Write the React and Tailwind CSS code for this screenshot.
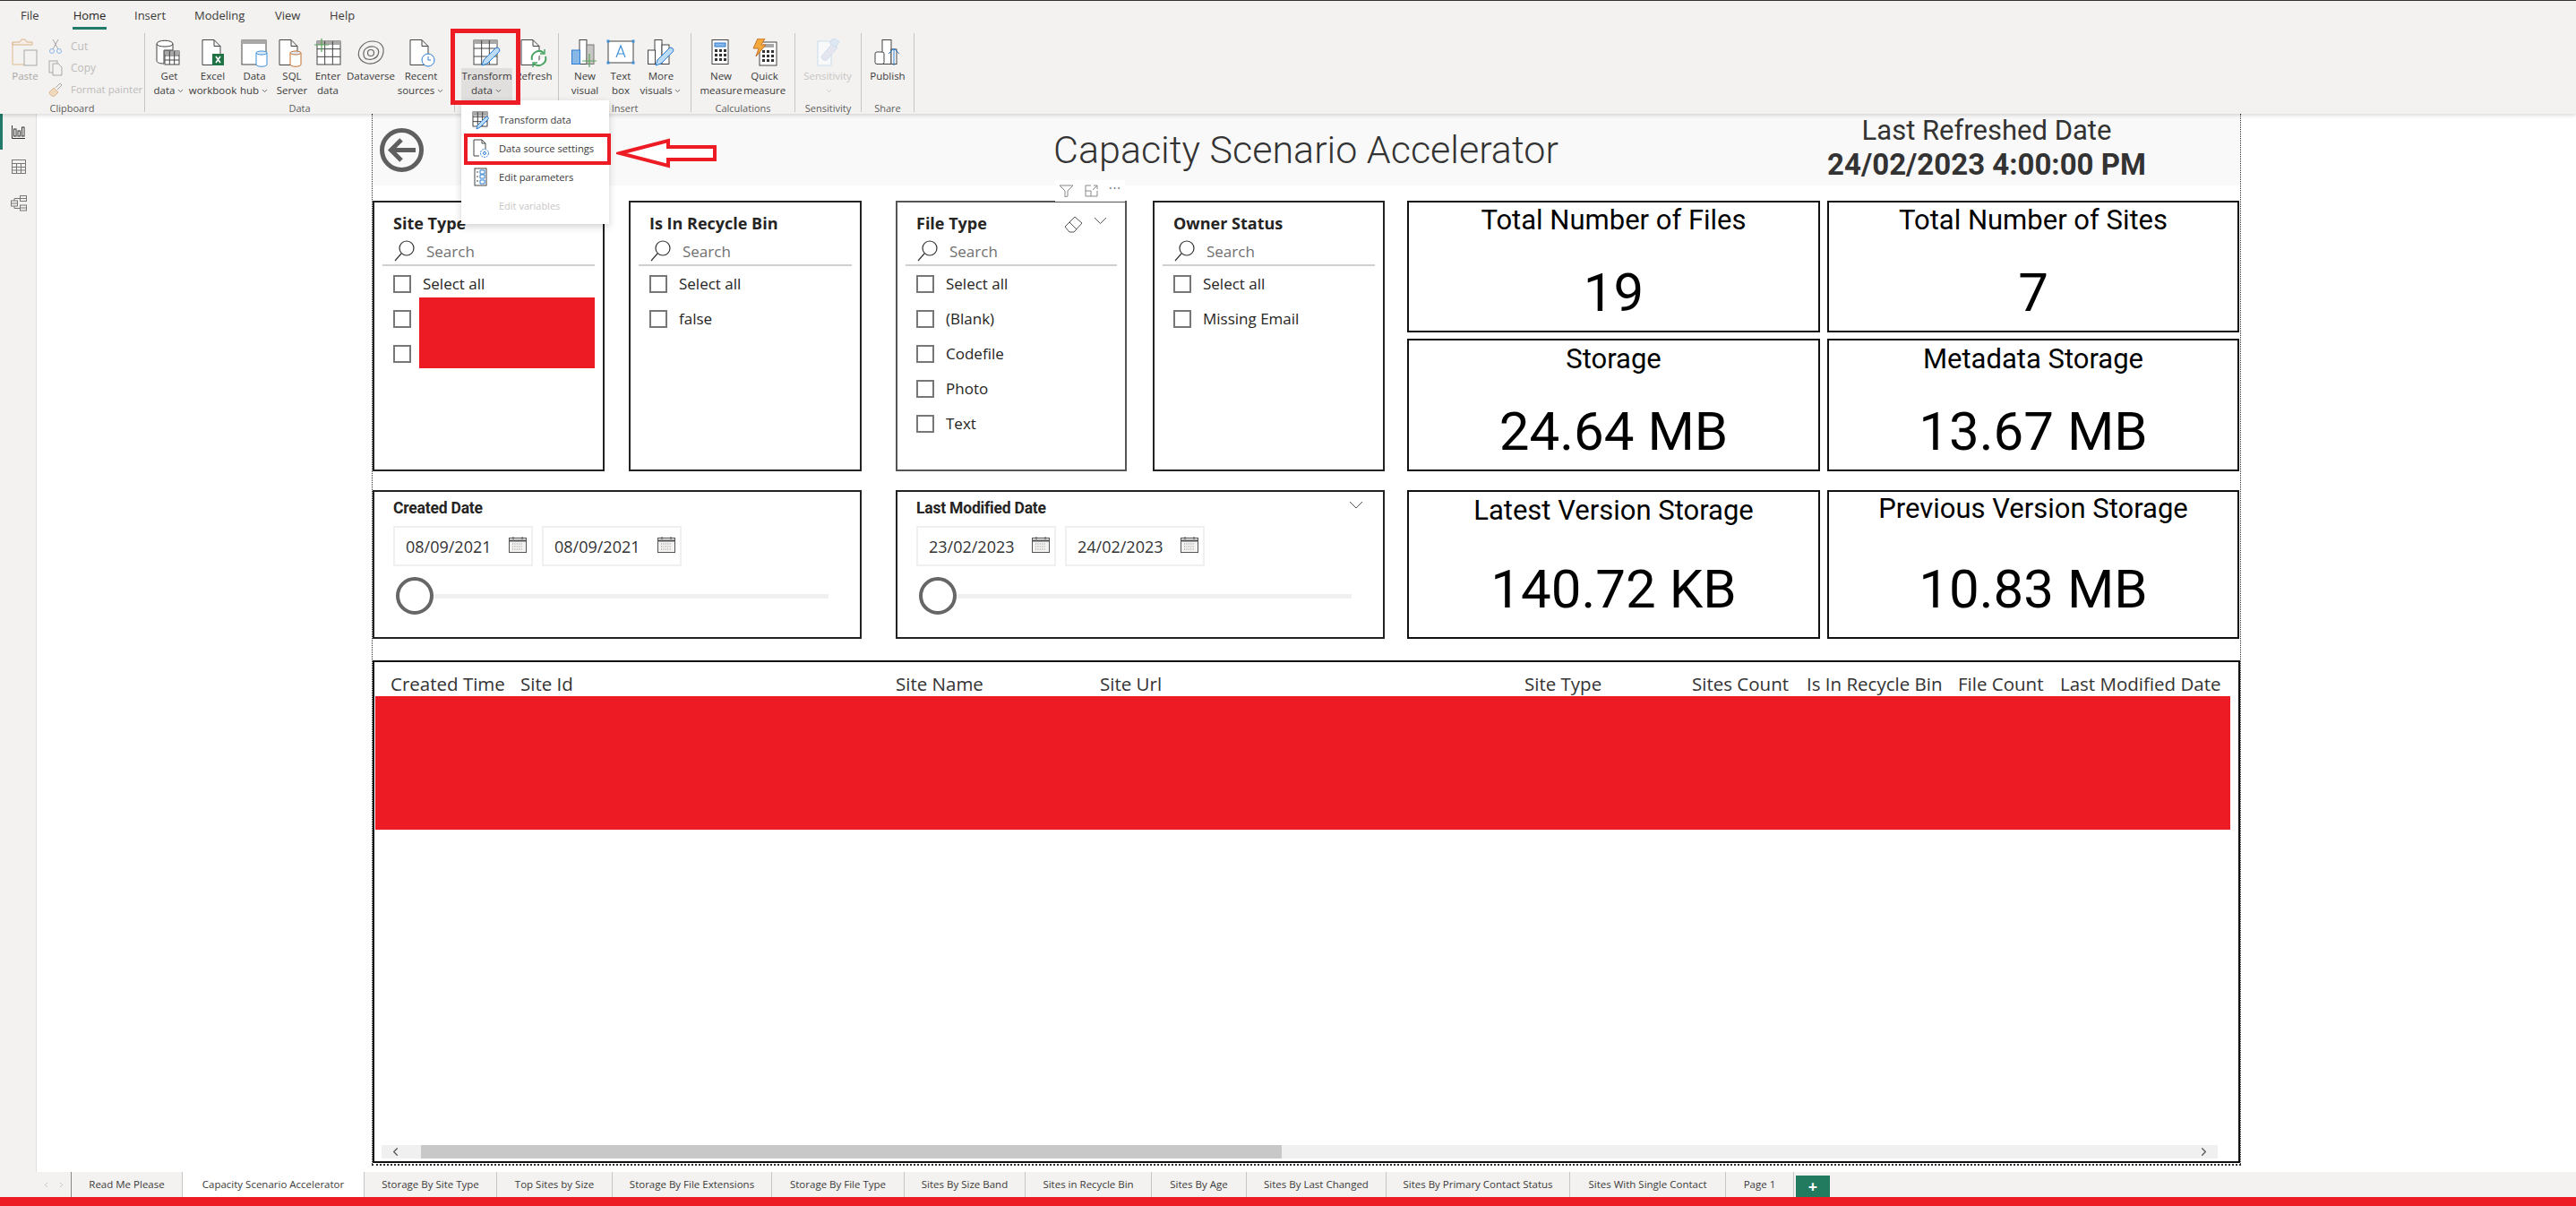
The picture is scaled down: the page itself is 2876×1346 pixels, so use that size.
import { ChevronDown, ChevronLeft, ChevronRight } from 'lucide-react';

const ui = "font-['Open_Sans',sans-serif]";
const din = "font-['Roboto',sans-serif]";

function Svg({ children, w = 32, h = 32, className = '' }) {
  return (
    <svg width={w} height={h} viewBox={`0 0 ${w} ${h}`} fill="none" stroke="#444" strokeWidth="1" className={className}>
      {children}
    </svg>
  );
}

const Pencil = ({ x = 0, y = 0 }) => (
  <path transform={`translate(${x} ${y})`} d="M0 20l2-6L15 1c1-1 3-1 4 0s1 3 0 4L6 18z" fill="#bcdcf5" stroke="#2b7cd3" />
);

const Grid = ({ x, y, w, h, cols, rows, head }) => {
  const lines = [];
  for (let i = 1; i < cols; i++) lines.push(<path key={`c${i}`} d={`M${x + (w * i) / cols} ${y}v${h}`} />);
  for (let i = 1; i < rows; i++) lines.push(<path key={`r${i}`} d={`M${x} ${y + (h * i) / rows}h${w}`} />);
  return (
    <g>
      <rect x={x} y={y} width={w} height={h} fill="#fff" />
      {head && <rect x={x} y={y} width={w} height="4" fill="#a8a8a8" stroke="none" />}
      {lines}
    </g>
  );
};

const Doc = () => <path d="M4 1.5h13l7 7v21H4zM17 1.5v7h7" fill="#fff" />;

const Cyl = ({ x, y, w, h, c }) => (
  <g stroke={c}>
    <path d={`M${x} ${y + 2}v${h}c0 3 ${w} 3 ${w} 0v-${h}`} fill="#fff" />
    <ellipse cx={x + w / 2} cy={y + 2} rx={w / 2} ry="2" fill="#dcebf7" />
  </g>
);

const icons = {
  get: (
    <Svg>
      <path d="M2 6c0-5 18-5 18 0v7H10v15c-4 0-8-1-8-3z" fill="#fff" />
      <path d="M2 6c0 4 18 4 18 0" />
      <Grid x={11} y={14} w={16} h={15} cols={3} rows={3} head />
    </Svg>
  ),
  excel: (
    <Svg>
      <Doc />
      <rect x="15" y="17" width="13" height="13" fill="#217346" stroke="none" />
      <path d="M19 20l5 7M24 20l-5 7" stroke="#fff" strokeWidth="1.6" />
    </Svg>
  ),
  hub: (
    <Svg>
      <rect x="2" y="2" width="27" height="27" fill="#fff" />
      <rect x="2" y="2" width="27" height="4" fill="#a8a8a8" stroke="none" />
      <Cyl x={18} y={14} w={12} h={13} c="#3a8fd8" />
    </Svg>
  ),
  sql: (
    <Svg>
      <path d="M2 1.5h13l7 7v21H2zM15 1.5v7h7" fill="#fff" />
      <Cyl x={14} y={14} w={12} h={13} c="#c8702c" />
    </Svg>
  ),
  enter: (
    <Svg>
      <Grid x={4} y={3} w={26} h={26} cols={3} rows={3} head />
      <path d="M9 0v15M1 7h16" stroke="#5aa55a" strokeWidth="1.2" />
    </Svg>
  ),
  dataverse: (
    <Svg>
      <path d="M3 21C0 12 8 3 18 3c8 0 13 5 12 12-1 9-9 14-17 13-5-1-8-3-10-7z" stroke="#666" strokeWidth="1.2" />
      <path d="M8 18c-1-6 5-10 11-9 5 1 7 5 5 9-2 5-8 6-12 5-2 0-4-2-4-5z" stroke="#666" strokeWidth="1.2" />
      <circle cx="16" cy="16" r="3.5" stroke="#666" strokeWidth="1.2" />
    </Svg>
  ),
  recent: (
    <Svg>
      <path d="M4 1.5h13l7 7v21H4zM17 1.5v7h7" fill="#fff" />
      <circle cx="24" cy="24" r="7" fill="#fff" stroke="#2b7cd3" />
      <path d="M24 20v4h3" stroke="#2b7cd3" />
    </Svg>
  ),
  transform: (
    <Svg>
      <Grid x={1} y={2} w={26} h={27} cols={3} rows={3} head />
      <Pencil x={10} y={10} />
    </Svg>
  ),
  refresh: (
    <Svg>
      <path d="M2 1.5h13l7 7v21H2zM15 1.5v7h7" fill="#fff" />
      <path d="M14 24a8 8 0 0 1 13-8M29 20a8 8 0 0 1-13 8" stroke="#4aa564" strokeWidth="2" fill="#fff" />
      <path d="M28 12v5h-5M15 32v-5h5" stroke="#4aa564" strokeWidth="1.5" />
    </Svg>
  ),
  visual: (
    <Svg>
      <rect x="10" y="1.5" width="8" height="27" fill="#fff" />
      <rect x="18" y="7" width="8" height="21.5" fill="#c8c6c4" stroke="#777" />
      <rect x="1.5" y="13" width="9" height="15.5" fill="#8ab8e6" stroke="#2b7cd3" />
      <path d="M21 17v15M13 25h16" stroke="#5aa55a" strokeWidth="1.2" />
    </Svg>
  ),
  textbox: (
    <Svg>
      <rect x="2" y="3" width="28" height="24" fill="#fff" />
      {[[2, 3], [30, 3], [2, 27], [30, 27]].map(([x, y]) => (
        <rect key={`${x}${y}`} x={x - 1.5} y={y - 1.5} width="3" height="3" fill="#3a8fd8" stroke="none" />
      ))}
      <path d="M11 21l5-13 5 13M12.5 17h7" stroke="#3a8fd8" strokeWidth="1.2" />
    </Svg>
  ),
  more: (
    <Svg>
      <rect x="9" y="1.5" width="8" height="27" fill="#fff" />
      <rect x="17" y="7" width="8" height="21.5" fill="#fff" />
      <rect x="1.5" y="13" width="8" height="15.5" fill="#fff" />
      <Pencil x={10} y={10} />
    </Svg>
  ),
  measure: (
    <Svg>
      <rect x="6" y="1.5" width="18" height="27" fill="#fff" />
      <rect x="9" y="5" width="12" height="4" fill="#8ab8e6" stroke="#2b7cd3" />
      {[12, 17, 22].map((y) => [10, 15, 20].map((x) => <rect key={`${x}${y}`} x={x - 1} y={y} width="3" height="3" fill="#333" stroke="none" />))}
    </Svg>
  ),
  quick: (
    <Svg>
      <rect x="10" y="4" width="19" height="26" fill="#fff" />
      <rect x="14" y="6" width="12" height="4" fill="#a8a8a8" stroke="none" />
      {[13, 18, 23].map((y) => [14, 19, 24].map((x) => <rect key={`${x}${y}`} x={x - 1} y={y} width="3" height="3" fill="#333" stroke="none" />))}
      <path d="M8 0h8l-4 7h5L6 20l3-9H3z" fill="#f2a93b" stroke="#c8702c" />
    </Svg>
  ),
  sensitivity: (
    <Svg>
      <path d="M5 3h15v27H5z" fill="#fff" stroke="#b8d4ee" strokeWidth="1.2" />
      <path d="M9 20l12-14 6 4-12 14c-2 1-6 0-6-4z" fill="#dde" stroke="#b8d4ee" />
      <rect x="20" y="1" width="8" height="7" transform="rotate(35 24 4)" fill="#cfe2f3" stroke="#b8d4ee" />
    </Svg>
  ),
  publish: (
    <Svg>
      <rect x="10" y="1.5" width="10" height="27" fill="#fff" />
      <rect x="2" y="15" width="10" height="13.5" rx="2" fill="#fff" />
      <rect x="20" y="12" width="6" height="16.5" fill="#fff" />
      <path d="M23 30V11M17 17l6-6 6 6" stroke="#2b7cd3" />
    </Svg>
  ),
};

const Chev = () => <ChevronDown size={9} strokeWidth={2} className="inline ml-[2px]" />;

function Btn({ icon, l1, l2, chev, w, faded, active }) {
  return (
    <div className={`flex flex-col items-center ${w} ${faded ? 'text-[#a9a7a5] opacity-60' : ''}`}>
      <div className="h-[34px]">{icon}</div>
      <div className={`flex flex-col items-center self-stretch leading-[16px] whitespace-nowrap ${active ? 'bg-[#e1dfdd] h-[36px] -mt-[1px] pt-[1px]' : ''}`}>
        <span>{l1}</span>
        <span>{l2}{chev && <Chev />}</span>
      </div>
    </div>
  );
}

function Group({ label, w, children, pl = 'pl-0' }) {
  return (
    <div className={`flex flex-col ${w} shrink-0`}>
      <div className={`flex h-[70px] ${pl}`}>{children}</div>
      <div className="text-center leading-[15px] text-[11px] text-[#605e5c]">{label}</div>
    </div>
  );
}

const Sep = () => <div className="w-px bg-[#c8c6c4] h-[88px] -mt-[6px] shrink-0" />;

function Ribbon() {
  return (
    <div className={`relative z-10 h-[127px] shrink-0 bg-[#f3f2f1] border-t border-[#333] shadow-[0_2px_4px_rgba(0,0,0,0.14)] text-[11.5px] text-[#3b3a39] ${ui}`}>
      <div className="flex h-[32px] items-start pt-[6px] text-[13px] leading-[20px] whitespace-nowrap">
        <span className="ml-[23px] w-[20px]">File</span>
        <span className="ml-[38px] w-[38px] text-[#252423] border-b-[3px] border-[#217a6a] h-[26px] text-center">Home</span>
        <span className="ml-[31px] w-[35px]">Insert</span>
        <span className="ml-[32px] w-[58px]">Modeling</span>
        <span className="ml-[32px] w-[30px]">View</span>
        <span className="ml-[31px] w-[29px]">Help</span>
      </div>
      <div className="flex pt-[10px]">
        <Group label="Clipboard" w="w-[161px]">
          <div className="flex flex-col items-center w-[56px] text-[#a9a7a5]">
            <div className="h-[34px]">
              <Svg>
                <path d="M2 4h8l2-3h4l2 3h6v3H2z" stroke="#d8b48c" fill="#f6ede4" />
                <path d="M2 4v25h14" stroke="#e0b890" />
                <rect x="15" y="13" width="14" height="17" fill="#f3f2f1" stroke="#a8a8a8" />
              </Svg>
            </div>
            <span className="leading-[16px]">Paste</span>
          </div>
          <div className="flex flex-col text-[#bdbbb9] text-[12px] -mt-[3px] leading-[24px] ml-[-2px] whitespace-nowrap">
            <div className="flex items-center gap-[5px] h-[24px]">
              <Svg w={16} h={18}><path d="M5 1l6 11M11 1L5 12" stroke="#a8a8a8" /><circle cx="4" cy="14" r="2.5" stroke="#8ab8e6" /><circle cx="12" cy="14" r="2.5" stroke="#8ab8e6" /></Svg>
              <span className="ml-[4px]">Cut</span>
            </div>
            <div className="flex items-center gap-[5px] h-[24px]">
              <Svg w={16} h={18}><rect x="1" y="1" width="9" height="13" stroke="#a8a8a8" /><path d="M5 4h6l4 4v9H5z" fill="#f3f2f1" stroke="#a8a8a8" /></Svg>
              <span className="ml-[4px]">Copy</span>
            </div>
            <div className="flex items-center gap-[5px] h-[24px]">
              <Svg w={16} h={18}><path d="M1 12l5-5 5 5-4 4c-2 1-5 0-6-4z" fill="#f0d8bc" stroke="#d8b48c" /><path d="M8 7l5-5 2 2-5 5" stroke="#a8a8a8" /></Svg>
              <span className="ml-[4px] text-[11.5px]">Format painter</span>
            </div>
          </div>
        </Group>
        <Sep />
        <Group label="Data" w="w-[345px]" pl="pl-[3px]">
          <Btn icon={icons.get} l1="Get" l2="data" chev w="w-[48px]" />
          <Btn icon={icons.excel} l1="Excel" l2="workbook" w="w-[49px]" />
          <Btn icon={icons.hub} l1="Data" l2="hub" chev w="w-[44px]" />
          <Btn icon={icons.sql} l1="SQL" l2="Server" w="w-[40px]" />
          <Btn icon={icons.enter} l1="Enter" l2="data" w="w-[40px]" />
          <Btn icon={icons.dataverse} l1="Dataverse" l2="" w="w-[56px]" />
          <Btn icon={icons.recent} l1="Recent" l2="sources" chev w="w-[56px]" />
        </Group>
        <Sep />
        <Group label="" w="w-[115px]" pl="pl-[7px]">
          <Btn icon={icons.transform} l1="Transform" l2="data" chev w="w-[57px]" active />
          <Btn icon={icons.refresh} l1="Refresh" l2="" w="w-[48px]" />
        </Group>
        <Sep />
        <Group label="Insert" w="w-[147px]" pl="pl-[8px]">
          <Btn icon={icons.visual} l1="New" l2="visual" w="w-[42px]" />
          <Btn icon={icons.textbox} l1="Text" l2="box" w="w-[38px]" />
          <Btn icon={icons.more} l1="More" l2="visuals" chev w="w-[52px]" />
        </Group>
        <Sep />
        <Group label="Calculations" w="w-[115px]" pl="pl-[8px]">
          <Btn icon={icons.measure} l1="New" l2="measure" w="w-[50px]" />
          <Btn icon={icons.quick} l1="Quick" l2="measure" w="w-[47px]" />
        </Group>
        <Sep />
        <Group label="Sensitivity" w="w-[73px]" pl="pl-[7px]">
          <Btn icon={icons.sensitivity} l1="Sensitivity" l2="" chev w="w-[58px]" faded />
        </Group>
        <Sep />
        <Group label="Share" w="w-[58px]" pl="pl-[6px]">
          <Btn icon={icons.publish} l1="Publish" l2="" w="w-[46px]" />
        </Group>
        <Sep />
      </div>
    </div>
  );
}

function Dropdown() {
  return (
    <div className={`absolute left-[515px] top-[112px] z-20 w-[165px] h-[138px] bg-white pt-[6px] shadow-[0_3px_8px_rgba(0,0,0,0.18)] text-[11.2px] text-[#3b3a39] ${ui}`}>
      {[
        ['Transform data', <Svg key="a" w={20} h={22}><Grid x={1} y={2} w={16} h={16} cols={3} rows={3} head /><path d="M5 21l1-4 9-9c1-1 2-1 3 0s0 2 0 2l-9 9z" fill="#bcdcf5" stroke="#2b7cd3" /></Svg>],
        ['Data source settings', <Svg key="b" w={20} h={22}><path d="M2 1h9l4 4v6M2 1v18h6M11 1v4h4" /><circle cx="14" cy="16" r="4.5" stroke="#2b7cd3" strokeDasharray="2 1" /><circle cx="14" cy="16" r="1.5" stroke="#2b7cd3" /></Svg>],
        ['Edit parameters', <Svg key="c" w={20} h={22}><rect x="3" y="1" width="13" height="19" /><path d="M5 5h2M5 10h2M5 15h2" /><path d="M9 3h5v4H9zM9 8h5v4H9zM9 14h5v4H9z" stroke="#2b7cd3" /></Svg>],
      ].map(([t, ic]) => (
        <div key={t} className="flex items-center h-[32px] pl-[12px] gap-[10px] whitespace-nowrap">
          {ic}
          <span>{t}</span>
        </div>
      ))}
      <div className="flex items-center h-[32px] pl-[42px] text-[#c8c6c4] text-[11px]">Edit variables</div>
    </div>
  );
}

function Annotations() {
  return (
    <>
      <div className="absolute left-[503px] top-[32px] z-30 w-[78px] h-[85px] border-[5px] border-[#ed1c24]" />
      <div className="absolute left-[518px] top-[149px] z-30 w-[164px] h-[35px] border-[4px] border-[#ed1c24]" />
      <svg className="absolute left-[688px] top-[152px] z-30" width="114" height="36" viewBox="0 0 114 36">
        <path d="M4 19L58 5v7h52v14H58v7z" fill="#fff" stroke="#ed1c24" strokeWidth="4" />
      </svg>
    </>
  );
}

function Search() {
  return (
    <div className="flex items-center h-[31px] mt-[5px] mx-[9px] border-b-2 border-[#d0d0d0] pl-[13px] text-[#707070] text-[17px]">
      <svg width="23" height="24" viewBox="0 0 23 24" fill="none" stroke="#333" strokeWidth="1.2" className="-mt-[2px]">
        <circle cx="14" cy="9" r="8" />
        <path d="M8 15L1 23" />
      </svg>
      <span className="ml-[13px] leading-[20px]">Search</span>
    </div>
  );
}

function CheckRow({ label, box = 'border-[#777]' }) {
  return (
    <div className="flex items-center h-[39px] pl-[21px] text-[#252423] text-[17px]">
      <div className={`size-[20px] border-2 ${box} shrink-0`} />
      <span className="ml-[13px] leading-[20px]">{label}</span>
    </div>
  );
}

function Slicer({ title, items, w, ml = '', border = 'border-[#222]', extra, redact }) {
  return (
    <div className={`relative ${w} ${ml} h-[302px] shrink-0 border-2 ${border} ${ui}`}>
      <div className="pl-[21px] pt-[11px] leading-[24px] font-bold text-[18px] text-[#252423]">{title}</div>
      <Search />
      <div>
        {items.map((it, i) => (
          <CheckRow key={`${it}${i}`} label={it} />
        ))}
        {redact}
      </div>
      {extra}
    </div>
  );
}

function Card({ title, value, h, pt = 'pt-[2px]', vpt = 'mt-[28px]' }) {
  return (
    <div className={`${h} border-2 border-[#111] flex flex-col items-center ${pt} text-black whitespace-nowrap ${din}`}>
      <div className="text-[31px] leading-[36px]">{title}</div>
      <div className={`text-[60px] leading-[70px] ${vpt}`}>{value}</div>
    </div>
  );
}

function DateInput({ v }) {
  return (
    <div className="flex w-[156px] h-[45px] border-2 border-[#f0f0f0] items-center pl-[12px] text-[18px] text-[#333]">
      <span className="w-[114px] pt-[1px]">{v}</span>
      <svg width="22" height="20" viewBox="0 0 22 20" fill="none" stroke="#555" className="-mt-[4px]">
        <rect x="1.5" y="2.5" width="19" height="16" fill="#f3f2f1" />
        <path d="M1.5 5.5h19" strokeWidth="2" />
        <path d="M6 1v3M16 1v3" />
        <path d="M5 9h12M5 12h12M5 15h12" stroke="#888" strokeDasharray="1 1.4" />
      </svg>
    </div>
  );
}

function DateSlicer({ title, a, b, ml = '', chev }) {
  return (
    <div className={`relative w-[546px] ${ml} h-[166px] shrink-0 border-2 border-[#222] pl-[21px] ${din}`}>
      <div className="pt-[6px] font-bold text-[17.5px] leading-[24px] text-[#252423] tracking-[-0.2px]">{title}</div>
      <div className={`flex gap-[10px] mt-[8px] ${ui}`}>
        <DateInput v={a} />
        <DateInput v={b} />
      </div>
      <div className="flex items-center mt-[12px] ml-[3px]">
        <div className="size-[42px] rounded-full border-[4px] border-[#666] bg-white shrink-0" />
        <div className="h-[5px] w-[441px] bg-[#f0f0f0]" />
      </div>
      {chev && (
        <svg className="absolute right-[22px] top-[10px]" width="16" height="10" viewBox="0 0 16 10" fill="none" stroke="#555">
          <path d="M1 1l7 7 7-7" />
        </svg>
      )}
    </div>
  );
}

const headers = ['Created Time', 'Site Id', 'Site Name', 'Site Url', 'Site Type', 'Sites Count', 'Is In Recycle Bin', 'File Count', 'Last Modified Date'];

function Table() {
  return (
    <div className={`h-[561px] mt-[24px] w-[2085px] border-2 border-[#111] flex flex-col ${ui}`}>
      <div className="grid grid-cols-[145px_419px_228px_474px_187px_128px_169px_114px_180px] h-[38px] pt-[10px] pl-[18px] leading-[28px] text-[20.5px] text-[#333] whitespace-nowrap">
        {headers.map((h) => (
          <span key={h}>{h}</span>
        ))}
      </div>
      <div className="ml-[1px] w-[2071px] h-[149px] bg-[#ed1c24]" />
      <div className="mt-auto mb-[3px] ml-[8px] w-[2050px] h-[15px] bg-[#f0f0f0] flex items-center">
        <div className="w-[44px] pl-[8px] text-[#555]"><ChevronLeft size={15} /></div>
        <div className="w-[961px] h-[15px] bg-[#c8c8c8]" />
        <div className="ml-auto pr-[8px] text-[#555]"><ChevronRight size={15} /></div>
      </div>
    </div>
  );
}

function Report() {
  return (
    <div className="relative ml-[374px] w-[2087px] h-[1174px] border-x border-b-2 border-dotted border-[#333]">
      <div className="flex items-center h-[80px] bg-[#f9f9f9] text-[#333]">
        <div className="ml-[8px] flex items-center justify-center size-[49px] rounded-full border-[5px] border-[#5f5f5f] shrink-0">
          <svg width="31" height="27" viewBox="0 0 31 27" fill="none" stroke="#5f5f5f" strokeWidth="5">
            <path d="M31 13.5H4M15 2L3.5 13.5 15 25" />
          </svg>
        </div>
        <div className={`ml-[700px] w-[570px] text-center text-[43px] font-light whitespace-nowrap ${din}`}>Capacity Scenario Accelerator</div>
        <div className={`ml-[275px] w-[400px] text-center whitespace-nowrap ${din}`}>
          <div className="text-[31px] leading-[38px] -mt-[4px]">Last Refreshed Date</div>
          <div className="text-[33px] leading-[38px] font-bold">24/02/2023 4:00:00 PM</div>
        </div>
      </div>

      <div className="flex mt-[17px]">
        <Slicer
          title="Site Type"
          w="w-[259px]"
          items={['Select all', '', '']}
          redact={<div className="absolute left-[50px] top-[106px] w-[196px] h-[79px] bg-[#ed1c24]" />}
        />
        <Slicer title="Is In Recycle Bin" w="w-[260px]" ml="ml-[27px]" items={['Select all', 'false']} />
        <Slicer
          title="File Type"
          w="w-[258px]"
          ml="ml-[38px]"
          border="border-[#555]"
          items={['Select all', '(Blank)', 'Codefile', 'Photo', 'Text']}
          extra={
            <>
              <svg className="absolute left-[186px] top-[15px]" width="22" height="20" viewBox="0 0 22 20" fill="none" stroke="#555">
                <path d="M1 12L12 1l8 7-9 10H6zM6 7l8 8" />
              </svg>
              <svg className="absolute left-[219px] top-[16px]" width="15" height="9" viewBox="0 0 15 9" fill="none" stroke="#555">
                <path d="M1 1l6.5 6.5L14 1" />
              </svg>
              <div className="absolute left-[176px] -top-[25px] flex gap-[5px] bg-white h-[24px] items-center px-[4px]">
                <svg width="18" height="14" viewBox="0 0 18 14" fill="none" stroke="#888"><path d="M1 1h15L10 7v6l-3 1V7z" /></svg>
                <svg width="16" height="14" viewBox="0 0 16 14" fill="none" stroke="#888" className="ml-[6px]"><path d="M1 1h6M1 1v12h13V7M1 7h6v6M9 6l5-5M10 1h4v4" /></svg>
                <span className="ml-[6px] text-[#666] text-[14px] leading-[10px] tracking-[1px] -mt-[6px]">···</span>
              </div>
            </>
          }
        />
        <Slicer title="Owner Status" w="w-[259px]" ml="ml-[29px]" items={['Select all', 'Missing Email']} />
        <div className="ml-[25px] w-[461px] flex flex-col gap-[7px]">
          <Card title="Total Number of Files" value="19" h="h-[147px]" />
          <Card title="Storage" value="24.64 MB" h="h-[148px]" pt="pt-[3px]" vpt="mt-[28px]" />
        </div>
        <div className="ml-[8px] w-[460px] flex flex-col gap-[7px]">
          <Card title="Total Number of Sites" value="7" h="h-[147px]" />
          <Card title="Metadata Storage" value="13.67 MB" h="h-[148px]" pt="pt-[3px]" vpt="mt-[28px]" />
        </div>
      </div>

      <div className="flex mt-[21px]">
        <DateSlicer title="Created Date" a="08/09/2021" b="08/09/2021" />
        <DateSlicer title="Last Modified Date" a="23/02/2023" b="24/02/2023" ml="ml-[38px]" chev />
        <div className="ml-[25px] w-[461px]">
          <Card title="Latest Version Storage" value="140.72 KB" h="h-[166px]" pt="pt-[3px]" vpt="mt-[35px]" />
        </div>
        <div className="ml-[8px] w-[460px]">
          <Card title="Previous Version Storage" value="10.83 MB" h="h-[166px]" pt="pt-[1px]" vpt="mt-[37px]" />
        </div>
      </div>

      <Table />
    </div>
  );
}

const tabs = [
  ['Read Me Please', 'w-[124px]'],
  ['Capacity Scenario Accelerator', 'w-[203px] bg-white'],
  ['Storage By Site Type', 'w-[148px]'],
  ['Top Sites by Size', 'w-[129px]'],
  ['Storage By File Extensions', 'w-[178px]'],
  ['Storage By File Type', 'w-[148px]'],
  ['Sites By Size Band', 'w-[135px]'],
  ['Sites in Recycle Bin', 'w-[141px]'],
  ['Sites By Age', 'w-[106px]'],
  ['Sites By Last Changed', 'w-[156px]'],
  ['Sites By Primary Contact Status', 'w-[205px]'],
  ['Sites With Single Contact', 'w-[174px]'],
  ['Page 1', 'w-[76px]'],
];

function TabBar() {
  return (
    <div className={`flex h-[28px] shrink-0 bg-[#f3f2f1] pl-[41px] text-[11.5px] text-[#3b3a39] ${ui}`}>
      <div className="w-[39px] flex items-center justify-center gap-[8px] border-r border-[#8a8886] text-[#b5b3b1]">
        <ChevronLeft size={9} />
        <ChevronRight size={9} />
      </div>
      {tabs.map(([t, w]) => (
        <div key={t} className={`${w} flex items-center justify-center border-r border-[#c8c6c4] whitespace-nowrap`}>
          {t}
        </div>
      ))}
      <div className="ml-[2px] mt-[4px] w-[38px] h-[24px] bg-[#237b5f] text-white text-[18px] font-bold flex items-center justify-center leading-none">+</div>
    </div>
  );
}

export default function App() {
  return (
    <div className="relative flex flex-col w-[2876px] h-[1346px] overflow-hidden bg-white">
      <Ribbon />
      <Dropdown />
      <Annotations />
      <div className="flex h-[1181px] shrink-0">
        <div className="w-[41px] shrink-0 bg-[#f3f2f1] border-r border-[#e1dfdd] flex flex-col relative">
          <div className="absolute left-0 top-0 w-[3px] h-[40px] bg-[#217a6a]" />
          <svg className="mt-[12px] ml-[13px]" width="16" height="16" viewBox="0 0 16 16" fill="none" stroke="#333" strokeWidth="1">
            <path d="M.5 1v14.5H15" /><rect x="2.5" y="5" width="2.5" height="8" /><rect x="7" y="7" width="2.5" height="6" /><rect x="11.5" y="3" width="2.5" height="10" />
          </svg>
          <svg className="mt-[23px] ml-[13px]" width="16" height="16" viewBox="0 0 16 16" fill="none" stroke="#777" strokeWidth="1">
            <rect x=".5" y=".5" width="15" height="15" /><path d="M.5 4.5h15M.5 8.5h15M.5 12h15M5.5 4.5v11M10.5 4.5v11" />
          </svg>
          <svg className="mt-[24px] ml-[12px]" width="18" height="18" viewBox="0 0 18 18" fill="none" stroke="#777" strokeWidth="1">
            <rect x=".5" y="6" width="7" height="6" /><rect x="10.5" y=".5" width="7" height="6" /><rect x="10.5" y="11" width="7" height="6" /><path d="M4 6V3.5h6.5M4 12v2.5h6.5M.5 9h7M10.5 3.5h7M10.5 14h7" />
          </svg>
        </div>
        <Report />
      </div>
      <TabBar />
      <div className="h-[10px] bg-[#ed1c24] shrink-0" />
    </div>
  );
}
